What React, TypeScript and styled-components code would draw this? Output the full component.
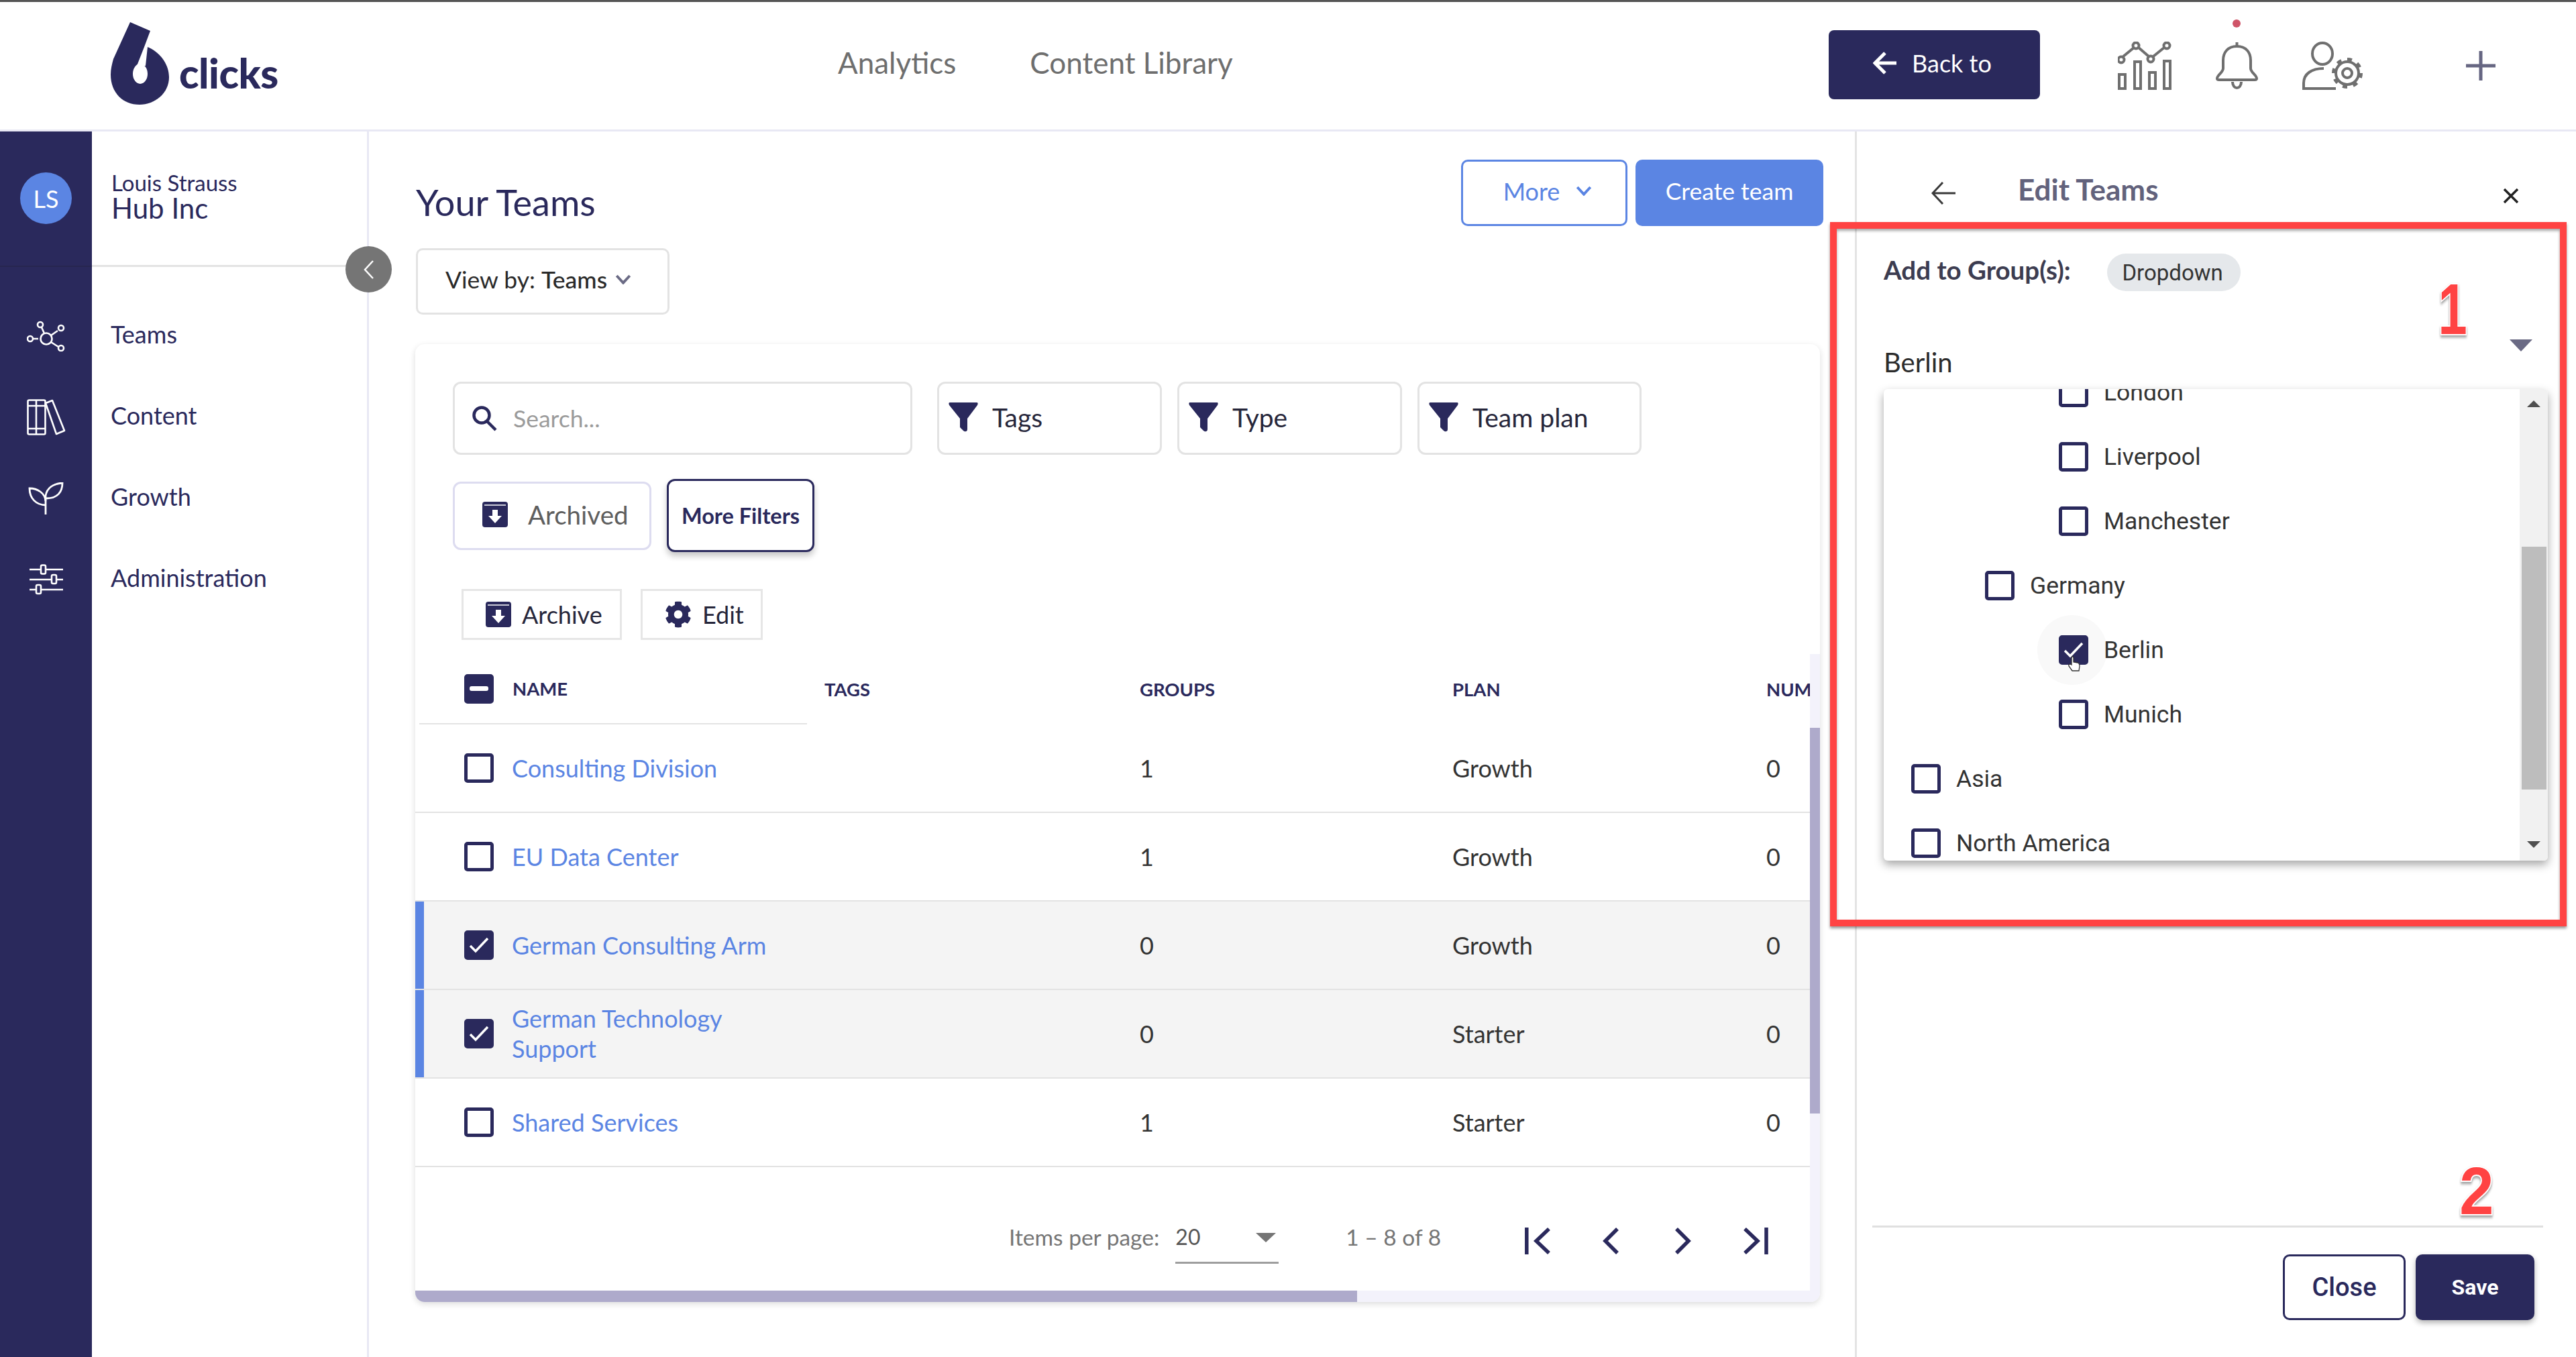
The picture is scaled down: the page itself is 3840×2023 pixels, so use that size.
import React from 'react';
import styled, { createGlobalStyle } from 'styled-components';
import { FaCog } from 'react-icons/fa';

const NAVY = '#2a295c';
const BLUE = '#5b85e3';
const LINE = '#e3e3e3';

const GlobalStyle = createGlobalStyle`
  html, body {
    margin: 0;
    padding: 0;
    background: #fff;
  }
  * {
    box-sizing: border-box;
  }
  body {
    font-family: Lato, "Liberation Sans", sans-serif;
  }
`;

const Page = styled.div`
  position: relative;
  width: 3840px;
  height: 2023px;
  overflow: hidden;
  background: #fff;
  border-top: 3px solid #555;
  display: flex;
  flex-direction: column;
`;

/* top bar */
const Header = styled.header`
  flex: none;
  height: 193px;
  display: flex;
  align-items: center;
  padding-left: 165px;
  border-bottom: 3px solid #e8e8f4;
`;

const Logo = styled.div`
  flex: none;
  width: 1084px;
  display: flex;
  align-items: flex-end;
  gap: 14px;
  margin-top: -6px;
`;

const LogoText = styled.span`
  font-size: 61px;
  font-weight: 900;
  line-height: 60px;
  color: ${NAVY};
  letter-spacing: -0.5px;
  margin-bottom: 18px;
`;

const TopNav = styled.nav`
  flex: none;
  width: 1477px;
  display: flex;
  gap: 110px;
  margin-top: -11px;
`;

const TopNavItem = styled.span`
  font-size: 44px;
  color: #6e6e6e;
`;

const BackButton = styled.button`
  flex: none;
  width: 315px;
  height: 103px;
  margin-top: -3px;
  background: ${NAVY};
  border: none;
  border-radius: 8px;
  color: #fff;
  font-family: Lato, sans-serif;
  font-size: 36px;
  display: flex;
  align-items: center;
  padding: 0 0 6px 66px;
  gap: 22px;
`;

const HeaderIcon = styled.div<{ $gap: number }>`
  position: relative;
  flex: none;
  margin-left: ${({ $gap }) => $gap}px;
  display: flex;
`;

const BellDot = styled.span`
  position: absolute;
  left: 25px;
  top: -33px;
  width: 12px;
  height: 12px;
  border-radius: 50%;
  background: #cf5468;
`;

/* page columns */
const Body = styled.div`
  flex: 1;
  min-height: 0;
  display: flex;
`;

const Rail = styled.aside`
  flex: none;
  width: 137px;
  background: ${NAVY};
`;

const RailTop = styled.div`
  height: 202px;
  padding-top: 61px;
  display: flex;
  justify-content: center;
  border-bottom: 2px solid #26254f;
`;

const Avatar = styled.div`
  width: 77px;
  height: 77px;
  border-radius: 50%;
  background: ${BLUE};
  color: #fff;
  font-size: 36px;
  display: flex;
  align-items: center;
  justify-content: center;
`;

const RailIcons = styled.div`
  padding-top: 42px;
`;

const RailIcon = styled.div`
  height: 121px;
  display: flex;
  align-items: center;
  justify-content: center;
`;

const Sidebar = styled.aside`
  position: relative;
  flex: none;
  width: 413px;
  border-right: 3px solid #e8e8f4;
`;

const Account = styled.div`
  height: 202px;
  width: 380px;
  padding: 59px 0 0 29px;
  border-bottom: 3px solid ${LINE};
  color: ${NAVY};
`;

const AccountUser = styled.div`
  font-size: 33px;
  line-height: 34px;
`;

const AccountOrg = styled.div`
  font-size: 42px;
  line-height: 42px;
`;

const CollapseButton = styled.button`
  position: absolute;
  top: 171px;
  right: -37px;
  width: 69px;
  height: 69px;
  border: none;
  border-radius: 50%;
  background: #757575;
  display: flex;
  align-items: center;
  justify-content: center;
  padding: 0;
`;

const SideNav = styled.nav`
  padding: 39px 0 0 28px;
`;

const SideNavItem = styled.div`
  height: 121px;
  display: flex;
  align-items: center;
  font-size: 36px;
  color: ${NAVY};
`;

/* main column */
const Main = styled.main`
  flex: none;
  width: 2216px;
  padding: 42px 48px 0 70px;
`;

const TitleRow = styled.div`
  display: flex;
  align-items: flex-end;
  justify-content: space-between;
`;

const Title = styled.h1`
  margin: 0;
  font-size: 54px;
  line-height: 70px;
  font-weight: 400;
  color: ${NAVY};
`;

const TitleActions = styled.div`
  display: flex;
  gap: 12px;
`;

const OutlineBlueButton = styled.button`
  width: 248px;
  height: 99px;
  border: 3px solid ${BLUE};
  border-radius: 10px;
  background: #fff;
  color: ${BLUE};
  font-family: Lato, sans-serif;
  font-size: 36px;
  padding: 0 0 6px 10px;
  display: flex;
  align-items: center;
  justify-content: center;
  gap: 24px;
`;

const CreateButton = styled.button`
  width: 280px;
  height: 99px;
  border: none;
  border-radius: 10px;
  background: ${BLUE};
  color: #fff;
  font-family: Lato, sans-serif;
  font-size: 35.5px;
  padding: 0 0 7px;
`;

const ViewBy = styled.button`
  display: flex;
  align-items: center;
  gap: 12px;
  width: 378px;
  height: 99px;
  margin-top: 33px;
  padding: 0 0 6px 41px;
  border: 3px solid ${LINE};
  border-radius: 10px;
  background: #fff;
  color: #2a2a2a;
  font-family: Lato, sans-serif;
  font-size: 35.5px;
  white-space: nowrap;
  b {
    font-weight: 500;
  }
`;

const Card = styled.section`
  margin: 44px 0 0 -1px;
  width: 2094px;
  height: 1428px;
  border-radius: 14px;
  overflow: hidden;
  background: #fff;
  box-shadow: 0 3px 10px rgba(0, 0, 0, 0.14);
  display: flex;
  flex-direction: column;
`;

const FilterRow = styled.div<{ $top: number }>`
  flex: none;
  display: flex;
  align-items: center;
  height: 109px;
  margin-top: ${({ $top }) => $top}px;
  padding-left: 56px;
  gap: 23px;
`;

const SearchBox = styled.div`
  width: 685px;
  height: 109px;
  margin-right: 14px;
  border: 3px solid ${LINE};
  border-radius: 12px;
  display: flex;
  align-items: center;
  gap: 23px;
  padding-left: 26px;
  color: #9b9b9b;
  font-size: 35.5px;
`;

const FilterChip = styled.div<{ $width: number }>`
  width: ${({ $width }) => $width}px;
  height: 109px;
  border: 3px solid ${LINE};
  border-radius: 12px;
  display: flex;
  align-items: center;
  gap: 21px;
  padding: 0 0 4px 14px;
  color: #26263a;
  font-size: 39px;
`;

const ArchivedChip = styled.div`
  width: 296px;
  height: 102px;
  border: 3px solid #dddcf0;
  border-radius: 12px;
  display: flex;
  align-items: center;
  gap: 30px;
  padding: 0 0 3px 41px;
  color: #5e5e5e;
  font-size: 38.5px;
`;

const MoreFilters = styled.button`
  width: 220px;
  height: 109px;
  border: 3px solid ${NAVY};
  border-radius: 12px;
  background: #fff;
  color: ${NAVY};
  font-family: Lato, sans-serif;
  font-size: 32.5px;
  font-weight: 700;
  box-shadow: 0 6px 10px rgba(0, 0, 0, 0.22);
`;

const BulkRow = styled.div`
  flex: none;
  display: flex;
  height: 76px;
  margin: 55px 0 0 69px;
  gap: 28px;
`;

const BulkButton = styled.div<{ $width: number }>`
  width: ${({ $width }) => $width}px;
  border: 3px solid #e6e6e6;
  display: flex;
  align-items: center;
  gap: 16px;
  padding-left: 33px;
  color: #26263a;
  font-size: 36px;
`;

/* table */
const TableWrap = styled.div`
  flex: 1;
  min-height: 0;
  display: flex;
  margin-top: 21px;
`;

const TableArea = styled.div`
  flex: 1;
  min-width: 0;
  overflow: hidden;
`;

const VTrack = styled.div`
  flex: none;
  width: 15px;
  background: #f3f2fb;
`;

const VThumb = styled.div`
  width: 15px;
  height: 575px;
  margin-top: 110px;
  background: #aeaacb;
`;

const HeadRow = styled.div`
  display: grid;
  grid-template-columns: 610px 470px 466px 468px 1fr;
  height: 105px;
  color: ${NAVY};
  font-size: 27.5px;
  font-weight: 700;
  white-space: nowrap;
  overflow: hidden;
`;

const HeadCell = styled.div`
  display: flex;
  align-items: center;
`;

const HeadLead = styled(HeadCell)`
  width: 578px;
  margin-left: 6px;
  padding-left: 67px;
  gap: 28px;
  border-bottom: 2px solid ${LINE};
`;

const TeamRow = styled.div<{ $selected?: boolean }>`
  display: grid;
  grid-template-columns: 144px 466px 470px 466px 468px 1fr;
  align-items: center;
  height: 132px;
  background: ${({ $selected }) => ($selected ? '#f4f4f4' : '#fff')};
  border-bottom: 2px solid ${LINE};
  box-shadow: ${({ $selected }) => ($selected ? `inset 13px 0 0 ${BLUE}` : 'none')};
  font-size: 36px;
  color: #333;
`;

const RowCheck = styled.div`
  padding-left: 73px;
  display: flex;
`;

const TeamLink = styled.a`
  display: block;
  max-width: 400px;
  color: ${BLUE};
  line-height: 45px;
`;

const Box = styled.span<{ $checked?: boolean }>`
  flex: none;
  width: 44px;
  height: 44px;
  border: 5px solid ${NAVY};
  border-radius: 5px;
  background: ${({ $checked }) => ($checked ? NAVY : '#fff')};
  display: flex;
  align-items: center;
  justify-content: center;
`;

const Pagination = styled.div`
  display: flex;
  align-items: center;
  height: 184px;
  padding: 24px 0 0 885px;
  color: #757575;
  font-size: 33.5px;
`;

const PageSelect = styled.div`
  width: 154px;
  height: 66px;
  margin: 14px 0 0 24px;
  padding-top: 6px;
  border-bottom: 3px solid #9e9e9e;
  color: #555;
  font-size: 32px;
  display: flex;
  justify-content: space-between;
`;

const PageRange = styled.span`
  flex: none;
  margin-left: 100px;
  width: 267px;
`;

const PageIcons = styled.div`
  display: flex;
  gap: 68px;
  margin-top: 12px;
`;

const HScroll = styled.div`
  flex: none;
  display: flex;
  height: 17px;
  background: #f3f2fb;
`;

const HThumb = styled.div`
  width: 1404px;
  background: #aeaacb;
`;

/* edit panel */
const Panel = styled.aside`
  flex: 1;
  min-width: 0;
  display: flex;
  flex-direction: column;
  border-left: 3px solid #e4e4e4;
  margin-left: -1px;
`;

const PanelHead = styled.div`
  flex: none;
  display: flex;
  align-items: center;
  height: 104px;
  margin-top: 34px;
  padding-left: 111px;
`;

const PanelBack = styled.div`
  display: flex;
  margin-top: 12px;
  width: 129px;
`;

const PanelTitle = styled.h2`
  margin: 0;
  font-size: 44px;
  font-weight: 700;
  color: #62627c;
`;

const PanelClose = styled.div`
  display: flex;
  margin: 20px 0 0 auto;
  padding-right: 85px;
`;

const PanelBodyWrap = styled.div`
  flex: 1;
  min-height: 0;
  padding: 44px 0 0 40px;
`;

const GroupRow = styled.div`
  display: flex;
  align-items: center;
  gap: 54px;
`;

const GroupLabel = styled.span`
  font-size: 38.5px;
  font-weight: 700;
  color: #3c3c50;
  margin-top: -8px;
`;

const GroupChip = styled.span`
  height: 56px;
  width: 199px;
  border-radius: 28px;
  background: #e5e8eb;
  color: #333;
  font-family: Roboto, sans-serif;
  font-size: 33px;
  padding-right: 3px;
  display: flex;
  align-items: center;
  justify-content: center;
`;

const SelectRow = styled.div`
  display: flex;
  justify-content: space-between;
  width: 990px;
  height: 50px;
  margin-top: 81px;
  padding-right: 23px;
  font-size: 40px;
  line-height: 50px;
  color: #2c2c2c;
`;

const SelectCaret = styled.span`
  width: 0;
  height: 0;
  margin-top: -9px;
  border-left: 17px solid transparent;
  border-right: 17px solid transparent;
  border-top: 18px solid #6a6a84;
`;

const Dropdown = styled.div`
  display: flex;
  width: 990px;
  height: 703px;
  margin-top: 15px;
  background: #fff;
  border-radius: 6px;
  box-shadow: 0 6px 14px rgba(0, 0, 0, 0.35);
  overflow: hidden;
`;

const DropdownList = styled.div`
  flex: 1;
  margin-top: -43px;
`;

const GroupItem = styled.div<{ $level: number }>`
  position: relative;
  height: 96px;
  display: flex;
  align-items: center;
  gap: 23px;
  padding-left: ${({ $level }) => 41 + $level * 110}px;
  font-family: Roboto, sans-serif;
  font-size: 35.5px;
  color: #333;
`;

const GroupText = styled.span`
  position: relative;
`;

const HoverHalo = styled.span`
  position: absolute;
  left: 229px;
  top: -4px;
  width: 104px;
  height: 104px;
  border-radius: 50%;
  background: #f9f9f9;
`;

const BoxOnHalo = styled.span`
  position: relative;
  display: flex;
`;

const PointerCursor = styled.span`
  position: absolute;
  left: 13px;
  top: 31px;
  display: flex;
`;

const DropdownScroll = styled.div`
  flex: none;
  width: 42px;
  background: #f1f1f1;
  display: flex;
  flex-direction: column;
  align-items: center;
`;

const ScrollArrow = styled.span<{ $down?: boolean }>`
  width: 0;
  height: 0;
  margin-top: ${({ $down }) => ($down ? '77px' : '17px')};
  border-left: 10px solid transparent;
  border-right: 10px solid transparent;
  ${({ $down }) => ($down ? 'border-top: 10px solid #505050;' : 'border-bottom: 10px solid #505050;')}
`;

const DropdownThumb = styled.div`
  width: 37px;
  height: 362px;
  margin-top: 208px;
  background: #bdbdbd;
`;

const PanelFoot = styled.div`
  flex: none;
  height: 196px;
  margin: 0 49px 0 23px;
  padding: 40px 13px 0 0;
  border-top: 3px solid #e0e0e0;
  display: flex;
  justify-content: flex-end;
  gap: 15px;
`;

const CloseButton = styled.button`
  width: 183px;
  height: 98px;
  border: 3px solid ${NAVY};
  border-radius: 10px;
  background: #fff;
  color: ${NAVY};
  font-family: Roboto, sans-serif;
  font-size: 38px;
  font-weight: 500;
`;

const SaveButton = styled.button`
  width: 177px;
  height: 98px;
  border: none;
  border-radius: 10px;
  background: ${NAVY};
  color: #fff;
  font-family: Roboto, sans-serif;
  font-size: 32px;
  font-weight: 700;
  box-shadow: 0 4px 8px rgba(0, 0, 0, 0.3);
`;

/* red annotations drawn over the screenshot */
const RedBox = styled.div`
  position: absolute;
  left: 2728px;
  top: 328px;
  width: 1098px;
  height: 1050px;
  border: 10px solid #ff4343;
  box-shadow: 0 3px 4px rgba(0, 0, 0, 0.4), inset 0 3px 4px rgba(0, 0, 0, 0.35);
  pointer-events: none;
`;

const Callout = styled.span<{ $left: number; $top: number; $size: number; $squeeze: number }>`
  position: absolute;
  left: ${({ $left }) => $left}px;
  top: ${({ $top }) => $top}px;
  font-family: "Liberation Sans", sans-serif;
  font-size: ${({ $size }) => $size}px;
  font-weight: 700;
  line-height: 1;
  color: #ff4343;
  transform: scaleX(${({ $squeeze }) => $squeeze});
  -webkit-text-stroke: 4px #fff;
  paint-order: stroke fill;
  filter: drop-shadow(0 3px 2px rgba(0, 0, 0, 0.4));
`;

/* drawings */
const Six = () => (
  <svg width="88" height="124" viewBox="0 0 88 124">
    <path
      d="M29 0L59 13L50 37L55 37C76 46 87 65 87 82C87 106 66 123 43 123C18 123 0 105 0 78C0 70 2 62 4 55Z"
      fill={NAVY}
    />
    <path d="M50 37L55 37L52 65L39 65Z" fill="#fff" />
    <ellipse cx="44" cy="77" rx="11" ry="15" fill="#fff" />
  </svg>
);

const ChartIcon = () => (
  <svg width="80" height="72" viewBox="0 0 80 72" fill="none" stroke="#6f6f6f" strokeWidth="4">
    <rect x="2" y="49" width="9" height="21" />
    <rect x="25" y="30" width="9" height="40" />
    <rect x="47" y="46" width="9" height="24" />
    <rect x="69" y="29" width="9" height="41" />
    <path d="M7 23L24 9M31 9L46 22M53 22L69 9" />
    <circle cx="5" cy="27" r="4.5" />
    <circle cx="27" cy="6" r="4.5" />
    <circle cx="49" cy="26" r="4.5" />
    <circle cx="73" cy="6" r="4.5" />
  </svg>
);

const BellIcon = () => (
  <svg width="63" height="72" viewBox="0 0 63 72" fill="none" stroke="#6f6f6f" strokeWidth="4">
    <path d="M31.5 1V7" />
    <path d="M31.5 7C18 7 11 16 11 28V40C11 46 2 50 2 55C2 57 3 57 5 57H58C60 57 61 57 61 55C61 50 52 46 52 40V28C52 16 45 7 31.5 7Z" />
    <path d="M25 60C25 72 38 72 38 60" />
  </svg>
);

const UserGearIcon = () => (
  <svg width="92" height="72" viewBox="0 0 92 72" fill="none" stroke="#6f6f6f" strokeWidth="4">
    <ellipse cx="30" cy="18" rx="15" ry="16" />
    <path d="M50 70H2V62C2 48 14 40 32 40" />
    <circle cx="67" cy="47" r="17" />
    <circle cx="67" cy="47" r="7" />
    <circle cx="67" cy="47" r="20.5" strokeWidth="5" strokeDasharray="7 9" />
  </svg>
);

const PlusIcon = () => (
  <svg width="44" height="44" viewBox="0 0 44 44" fill="none" stroke="#666682" strokeWidth="5">
    <path d="M22 0V44M0 22H44" />
  </svg>
);

const TeamsIcon = () => (
  <svg width="58" height="46" viewBox="0 0 58 46" fill="none" stroke="#fff" strokeWidth="2.6">
    <circle cx="29" cy="27" r="8.5" />
    <circle cx="20" cy="6" r="4" />
    <circle cx="51" cy="11" r="4" />
    <circle cx="5" cy="27" r="4" />
    <circle cx="51" cy="41" r="4" />
    <path d="M22 10L26 19M36 22L46 15M10 27H17M36 32L47 39" />
  </svg>
);

const BooksIcon = () => (
  <svg width="58" height="54" viewBox="0 0 58 54" fill="none" stroke="#fff" strokeWidth="2.6" strokeLinejoin="round">
    <rect x="1.500" y="1.500" width="26" height="51" rx="2" />
    <path d="M14 2V52M2 10H27M2 44H27" />
    <path d="M28 6L38 2L56 47L44 52Z" />
  </svg>
);

const PlantIcon = () => (
  <svg width="54" height="48" viewBox="0 0 54 48" fill="none" stroke="#fff" strokeWidth="2.8">
    <path d="M26 48V20C28 8 38 2 51 1C51 14 44 24 27 24" />
    <path d="M26 34C12 34 2 24 2 9C14 9 25 16 26 28" />
  </svg>
);

const SlidersIcon = () => (
  <svg width="52" height="46" viewBox="0 0 52 46" fill="#2a295c" stroke="#fff" strokeWidth="2.6">
    <path d="M1 8H51M1 23H51M1 38H51" />
    <rect x="18" y="1.500" width="7" height="13" rx="2" />
    <rect x="34" y="16" width="7" height="13" rx="2" />
    <rect x="11" y="31" width="7" height="13" rx="2" />
  </svg>
);

const ArchiveIcon = () => (
  <svg width="38" height="38" viewBox="0 0 38 38">
    <rect width="38" height="38" rx="4" fill={NAVY} />
    <path d="M3 5H35" stroke="#fff" strokeWidth="1.500" />
    <path d="M15 12H23V21H29L19 32L9 21H15Z" fill="#fff" />
  </svg>
);

const FunnelIcon = () => (
  <svg width="44" height="44" viewBox="0 0 44 44">
    <path d="M2 0H42C44 0 44 2 43 4L28 24V40C28 44 24 44 22 42L17 37V24L1 4C0 2 0 0 2 0Z" fill={NAVY} />
  </svg>
);

const SearchIcon = () => (
  <svg width="38" height="38" viewBox="0 0 38 38" fill="none" stroke={NAVY} strokeWidth="4.500">
    <circle cx="14" cy="14" r="11.500" />
    <path d="M22 23L35 36" />
  </svg>
);

const Chevron = ({ color, size = 24 }: { color: string; size?: number }) => (
  <svg width={size} height={size * 0.65} viewBox="0 0 24 16" fill="none" stroke={color} strokeWidth="4">
    <path d="M2 2L12 13L22 2" />
  </svg>
);

const Tick = () => (
  <svg width="32" height="28" viewBox="0 0 32 28" fill="none" stroke="#fff" strokeWidth="3.500">
    <path d="M3 15L11 23L29 4" />
  </svg>
);

const Dash = () => (
  <svg width="30" height="10" viewBox="0 0 30 10">
    <rect width="28" height="7" x="1" y="1" rx="3" fill="#fff" />
  </svg>
);

const PagerIcon = ({ d }: { d: string }) => (
  <svg width="40" height="40" viewBox="0 0 40 40" fill="none" stroke={NAVY} strokeWidth="5.500">
    <path d={d} />
  </svg>
);

const HandCursor = () => (
  <svg width="20" height="24" viewBox="0 0 20 24" fill="#fff" stroke="#333" strokeWidth="1.300">
    <path d="M6 13V3C6 0 9 0 9 3V9L15 10C18 11 18 13 18 15L17 22H7L2 15C1 13 3 11 6 13Z" />
  </svg>
);

type Team = { name: string; groups: number; plan: string; selected?: boolean };

const teams: Team[] = [
  { name: 'Consulting Division', groups: 1, plan: 'Growth' },
  { name: 'EU Data Center', groups: 1, plan: 'Growth' },
  { name: 'German Consulting Arm', groups: 0, plan: 'Growth', selected: true },
  { name: 'German Technology Support', groups: 0, plan: 'Starter', selected: true },
  { name: 'Shared Services', groups: 1, plan: 'Starter' },
];

const groups = [
  { label: 'London', level: 2 },
  { label: 'Liverpool', level: 2 },
  { label: 'Manchester', level: 2 },
  { label: 'Germany', level: 1 },
  { label: 'Berlin', level: 2, checked: true },
  { label: 'Munich', level: 2 },
  { label: 'Asia', level: 0 },
  { label: 'North America', level: 0 },
];

const App = () => (
  <Page>
    <GlobalStyle />
    <Header>
      <Logo>
        <Six />
        <LogoText>clicks</LogoText>
      </Logo>
      <TopNav>
        <TopNavItem>Analytics</TopNavItem>
        <TopNavItem>Content Library</TopNavItem>
      </TopNav>
      <BackButton>
        <svg width="36" height="34" viewBox="0 0 36 34" fill="none" stroke="#fff" strokeWidth="5">
          <path d="M18 2L3 17L18 32M3 17H35" />
        </svg>
        Back to
      </BackButton>
      <HeaderIcon $gap={116}>
        <ChartIcon />
      </HeaderIcon>
      <HeaderIcon $gap={66}>
        <BellDot />
        <BellIcon />
      </HeaderIcon>
      <HeaderIcon $gap={66}>
        <UserGearIcon />
      </HeaderIcon>
      <HeaderIcon $gap={152}>
        <PlusIcon />
      </HeaderIcon>
    </Header>
    <Body>
      <Rail>
        <RailTop>
          <Avatar>LS</Avatar>
        </RailTop>
        <RailIcons>
          <RailIcon>
            <TeamsIcon />
          </RailIcon>
          <RailIcon>
            <BooksIcon />
          </RailIcon>
          <RailIcon>
            <PlantIcon />
          </RailIcon>
          <RailIcon>
            <SlidersIcon />
          </RailIcon>
        </RailIcons>
      </Rail>
      <Sidebar>
        <Account>
          <AccountUser>Louis Strauss</AccountUser>
          <AccountOrg>Hub Inc</AccountOrg>
        </Account>
        <CollapseButton>
          <svg width="18" height="30" viewBox="0 0 18 30" fill="none" stroke="#fff" strokeWidth="2.500">
            <path d="M15 2L3 15L15 28" />
          </svg>
        </CollapseButton>
        <SideNav>
          <SideNavItem>Teams</SideNavItem>
          <SideNavItem>Content</SideNavItem>
          <SideNavItem>Growth</SideNavItem>
          <SideNavItem>Administration</SideNavItem>
        </SideNav>
      </Sidebar>
      <Main>
        <TitleRow>
          <Title>Your Teams</Title>
          <TitleActions>
            <OutlineBlueButton>
              More
              <Chevron color={BLUE} />
            </OutlineBlueButton>
            <CreateButton>Create team</CreateButton>
          </TitleActions>
        </TitleRow>
        <ViewBy>
          <span>
            View by: <b>Teams</b>
          </span>
          <Chevron color="#6b6b85" />
        </ViewBy>
        <Card>
          <FilterRow $top={56}>
            <SearchBox>
              <SearchIcon />
              Search...
            </SearchBox>
            <FilterChip $width={335}>
              <FunnelIcon />
              Tags
            </FilterChip>
            <FilterChip $width={335}>
              <FunnelIcon />
              Type
            </FilterChip>
            <FilterChip $width={334}>
              <FunnelIcon />
              Team plan
            </FilterChip>
          </FilterRow>
          <FilterRow $top={36}>
            <ArchivedChip>
              <ArchiveIcon />
              Archived
            </ArchivedChip>
            <MoreFilters>More Filters</MoreFilters>
          </FilterRow>
          <BulkRow>
            <BulkButton $width={239}>
              <ArchiveIcon />
              Archive
            </BulkButton>
            <BulkButton $width={182}>
              <FaCog size={40} color={NAVY} />
              Edit
            </BulkButton>
          </BulkRow>
          <TableWrap>
            <TableArea>
              <HeadRow>
                <HeadLead>
                  <Box $checked>
                    <Dash />
                  </Box>
                  NAME
                </HeadLead>
                <HeadCell>TAGS</HeadCell>
                <HeadCell>GROUPS</HeadCell>
                <HeadCell>PLAN</HeadCell>
                <HeadCell>NUMBER</HeadCell>
              </HeadRow>
              {teams.map((team) => (
                <TeamRow key={team.name} $selected={team.selected}>
                  <RowCheck>
                    <Box $checked={team.selected}>{team.selected && <Tick />}</Box>
                  </RowCheck>
                  <TeamLink>{team.name}</TeamLink>
                  <span />
                  <span>{team.groups}</span>
                  <span>{team.plan}</span>
                  <span>0</span>
                </TeamRow>
              ))}
              <Pagination>
                Items per page:
                <PageSelect>
                  20
                  <svg width="30" height="14" viewBox="0 0 30 14" style={{ marginTop: 14, marginRight: 4 }}>
                    <path d="M0 0H30L15 14Z" fill="#757575" />
                  </svg>
                </PageSelect>
                <PageRange>1 – 8 of 8</PageRange>
                <PageIcons>
                  <PagerIcon d="M2.800 0V40M36 2L17 20L36 38" />
                  <PagerIcon d="M30 2L12 20L30 38" />
                  <PagerIcon d="M10 2L28 20L10 38" />
                  <PagerIcon d="M4 2L23 20L4 38M36 0V40" />
                </PageIcons>
              </Pagination>
            </TableArea>
            <VTrack>
              <VThumb />
            </VTrack>
          </TableWrap>
          <HScroll>
            <HThumb />
          </HScroll>
        </Card>
      </Main>
      <Panel>
        <PanelHead>
          <PanelBack>
            <svg width="36" height="36" viewBox="0 0 36 36" fill="none" stroke="#3a3a3a" strokeWidth="3">
              <path d="M17 2L2 18L17 34M2 18H36" />
            </svg>
          </PanelBack>
          <PanelTitle>Edit Teams</PanelTitle>
          <PanelClose>
            <svg width="24" height="24" viewBox="0 0 24 24" fill="none" stroke="#222" strokeWidth="3.500">
              <path d="M2 2L22 22M22 2L2 22" />
            </svg>
          </PanelClose>
        </PanelHead>
        <PanelBodyWrap>
          <GroupRow>
            <GroupLabel>Add to Group(s):</GroupLabel>
            <GroupChip>Dropdown</GroupChip>
          </GroupRow>
          <SelectRow>
            Berlin
            <SelectCaret />
          </SelectRow>
          <Dropdown>
            <DropdownList>
              {groups.map((group) => (
                <GroupItem key={group.label} $level={group.level}>
                  {group.checked && <HoverHalo />}
                  <BoxOnHalo>
                    <Box $checked={group.checked}>{group.checked && <Tick />}</Box>
                    {group.checked && (
                      <PointerCursor>
                        <HandCursor />
                      </PointerCursor>
                    )}
                  </BoxOnHalo>
                  <GroupText>{group.label}</GroupText>
                </GroupItem>
              ))}
            </DropdownList>
            <DropdownScroll>
              <ScrollArrow />
              <DropdownThumb />
              <ScrollArrow $down />
            </DropdownScroll>
          </Dropdown>
        </PanelBodyWrap>
        <PanelFoot>
          <CloseButton>Close</CloseButton>
          <SaveButton>Save</SaveButton>
        </PanelFoot>
      </Panel>
    </Body>
    <RedBox />
    <Callout $left={3626} $top={404} $size={108} $squeeze={0.72}>
      1
    </Callout>
    <Callout $left={3664} $top={1722} $size={100} $squeeze={0.92}>
      2
    </Callout>
  </Page>
);

export default App;
